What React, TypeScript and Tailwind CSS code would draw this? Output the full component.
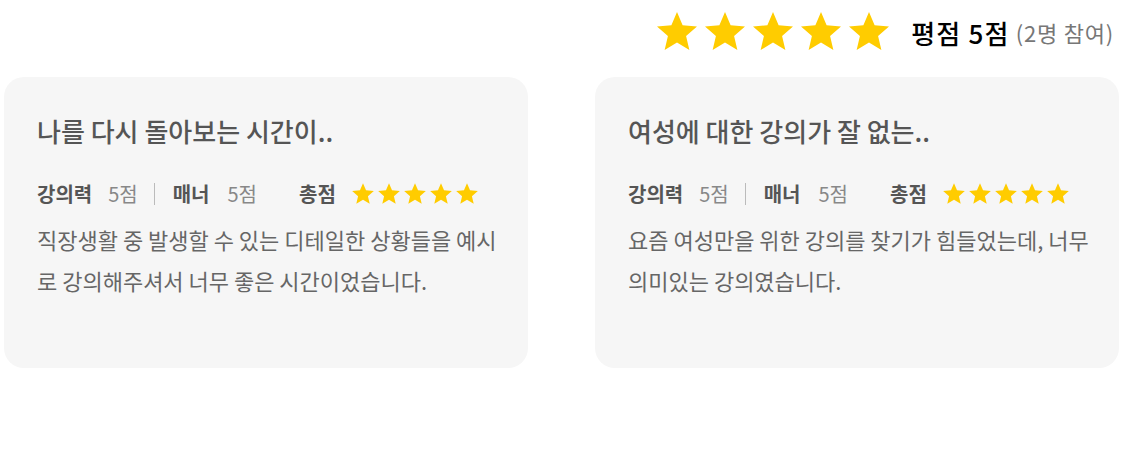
import React from "react";

const STAR = "M12 17.27L18.18 21l-1.64-7.03L22 9.24l-7.19-.61L12 2 9.19 8.63 2 9.24l5.46 4.73L5.82 21z";

function Star({ className }: { className: string }) {
  return (
    <svg viewBox="0 0 24 24" className={className} fill="#ffcc00">
      <path d={STAR} />
    </svg>
  );
}

type Review = {
  title: string;
  body: string;
};

const reviews: Review[] = [
  {
    title: "나를 다시 돌아보는 시간이..",
    body: "직장생활 중 발생할 수 있는 디테일한 상황들을 예시로 강의해주셔서 너무 좋은 시간이었습니다.",
  },
  {
    title: "여성에 대한 강의가 잘 없는..",
    body: "요즘 여성만을 위한 강의를 찾기가 힘들었는데, 너무 의미있는 강의였습니다.",
  },
];

function ReviewCard({ review }: { review: Review }) {
  return (
    <li className="w-[524px] h-[291px] rounded-[20px] bg-[#f6f6f6] pl-[33px] pr-[26px] pt-[36px]">
      <h2 className="text-[26px] leading-[36px] font-medium text-[#555]">{review.title}</h2>
      <div className="mt-[32px] flex items-center h-[26px] text-[20px]">
        <span className="font-bold text-[#555]">강의력</span>
        <span className="ml-[16px] text-[#888]">5점</span>
        <span className="ml-[16px] w-[1px] h-[22px] bg-[#bbb]" />
        <span className="ml-[18px] font-bold text-[#555]">매너</span>
        <span className="ml-[18px] text-[#888]">5점</span>
        <span className="ml-[42px] font-bold text-[#555]">총점</span>
        <div className="ml-[14px] flex">
          {[0, 1, 2, 3, 4].map((i) => (
            <Star key={i} className="w-[26px] h-[26px]" />
          ))}
        </div>
      </div>
      <p className="mt-[12px] text-[22px] leading-[41px] text-[#666] break-all">{review.body}</p>
    </li>
  );
}

export default function App() {
  return (
    <div className="w-[1124px] h-[474px] bg-white" style={{ fontFamily: '"Noto Sans CJK KR", "Noto Sans", sans-serif' }}>
      <div className="flex justify-end items-center pt-[8px] pr-[10px]">
        <div className="flex">
          {[0, 1, 2, 3, 4].map((i) => (
            <Star key={i} className="w-[48px] h-[48px]" />
          ))}
        </div>
        <span className="ml-[18px] text-[26px] font-medium text-black tracking-[1.2px]">평점 5점</span>
        <span className="ml-[6px] text-[22px] text-[#777] tracking-[0.8px]">(2명 참여)</span>
      </div>
      <ul className="mt-[21px] flex justify-between pl-[4px] pr-[5px]">
        {reviews.map((r) => (
          <ReviewCard key={r.title} review={r} />
        ))}
      </ul>
    </div>
  );
}
